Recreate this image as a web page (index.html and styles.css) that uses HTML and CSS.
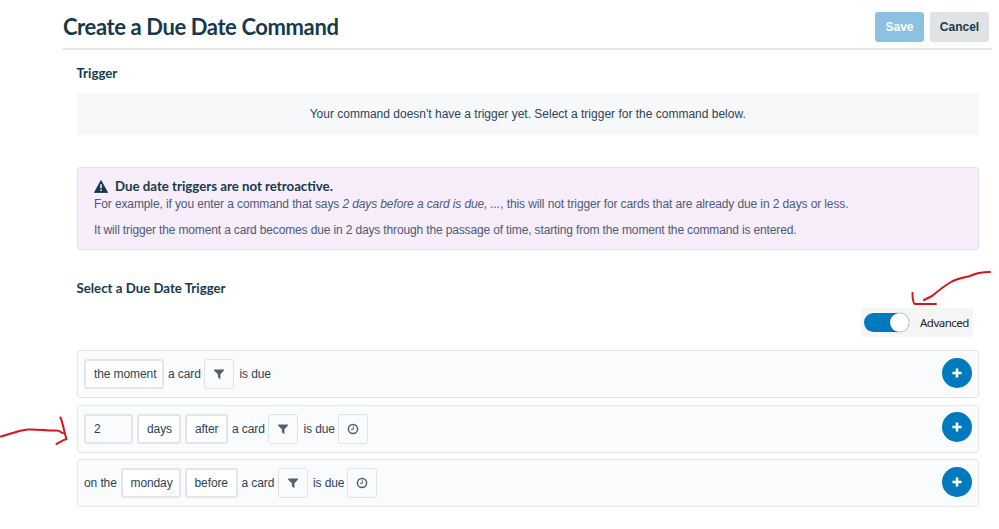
FILE: index.html
```html
<!DOCTYPE html>
<html lang="en">
<head>
    <meta charset="UTF-8">
    <meta name="viewport" content="width=device-width, initial-scale=1.0">
    <title>Create a Due Date Command</title>
    <link rel="stylesheet" href="styles.css">
</head>
<body>
    <!-- Shared icons -->
    <svg class="icon-defs" width="0" height="0">
        <symbol id="icon-filter" viewBox="0 0 12 12">
            <path d="M1.2 1.5h9.6v1.3L7.4 6.2V11.3L4.9 9.3V6.2L1.2 2.8z" fill="currentColor"/>
        </symbol>
        <symbol id="icon-clock" viewBox="0 0 12 12">
            <circle cx="6" cy="6" r="4.6" fill="none" stroke="currentColor" stroke-width="1.5"/>
            <path d="M6.3 3.3v3.1H4" fill="none" stroke="currentColor" stroke-width="1"/>
        </symbol>
        <symbol id="icon-plus" viewBox="0 0 10 10">
            <path d="M5 .5v9M.4 5h9.2" fill="none" stroke="currentColor" stroke-width="2.6"/>
        </symbol>
    </svg>

    <div class="page">
        <header class="page-header">
            <h1>Create a Due Date Command</h1>
            <div class="header-actions">
                <button class="btn btn-save">Save</button>
                <button class="btn btn-cancel">Cancel</button>
            </div>
        </header>

        <main class="content">
            <h2>Trigger</h2>
            <div class="empty-trigger">Your command doesn't have a trigger yet. Select a trigger for the command below.</div>

            <div class="notice">
                <h3>
                    <svg class="warning-icon" viewBox="0 0 14 13">
                        <path d="M7 .5 13.6 12.5H.4z" fill="currentColor" stroke="currentColor" stroke-width=".8" stroke-linejoin="round"/>
                        <path d="M7 4.3v4M7 9.5v1.6" stroke="#f7edfb" stroke-width="1.6"/>
                    </svg>
                    <span>Due date triggers are not retroactive.</span>
                </h3>
                <p class="notice-example">For example, if you enter a command that says <em>2 days before a card is due, ...</em>, this will not trigger for cards that are already due in 2 days or less.</p>
                <p class="notice-detail">It will trigger the moment a card becomes due in 2 days through the passage of time, starting from the moment the command is entered.</p>
            </div>

            <h2 class="select-title">Select a Due Date Trigger</h2>
            <div class="advanced">
                <span class="switch"><span class="knob"></span></span>
                <span class="advanced-label">Advanced</span>
            </div>

            <div class="trigger-list">
                <div class="trigger">
                    <span class="choice choice-moment">the moment</span>
                    <span class="words">a card</span>
                    <button class="icon-btn"><svg><use href="#icon-filter"/></svg></button>
                    <span class="words due">is due</span>
                    <button class="add-btn"><svg><use href="#icon-plus"/></svg></button>
                </div>
                <div class="trigger">
                    <span class="choice choice-number">2</span>
                    <span class="choice choice-days">days</span>
                    <span class="choice choice-after">after</span>
                    <span class="words">a card</span>
                    <button class="icon-btn"><svg><use href="#icon-filter"/></svg></button>
                    <span class="words due">is due</span>
                    <button class="icon-btn"><svg><use href="#icon-clock"/></svg></button>
                    <button class="add-btn"><svg><use href="#icon-plus"/></svg></button>
                </div>
                <div class="trigger">
                    <span class="words on-the">on the</span>
                    <span class="choice choice-monday">monday</span>
                    <span class="choice choice-before">before</span>
                    <span class="words">a card</span>
                    <button class="icon-btn"><svg><use href="#icon-filter"/></svg></button>
                    <span class="words due">is due</span>
                    <button class="icon-btn"><svg><use href="#icon-clock"/></svg></button>
                    <button class="add-btn"><svg><use href="#icon-plus"/></svg></button>
                </div>
            </div>
        </main>
    </div>

    <!-- Hand-drawn arrows -->
    <svg class="marks" viewBox="0 0 999 529">
        <path d="M990 272C981 272 976 273 970 276C962 278 956 279 951 282C944 286 938 291 932 296L924 300"/>
        <path d="M912.5 293C912.5 297 912.5 303 915 304H936"/>
        <path d="M1 436.5C10 434 20 430 28 429.5C38 429 48 431 56 430.5C60 430 61 433 63 433"/>
        <path d="M60.5 417.5C63 423 64 432 66.5 439C63 440 60 442 56.5 444"/>
    </svg>
</body>
</html>
```

FILE: styles.css
```css
* {
    box-sizing: border-box;
}

body {
    margin: 0;
    height: 529px;
    overflow: hidden;
    background: #fff;
    color: #2b4455;
    font-family: "Liberation Sans", Arial, sans-serif;
    font-size: 12px;
}

h1, h2, h3, p {
    margin: 0;
}

h1, h2, h3 {
    color: #17394d;
    font-family: Lato, sans-serif;
    font-weight: 700;
    white-space: nowrap;
}

button {
    padding: 0;
    border: none;
    font-family: inherit;
}

.icon-defs {
    position: absolute;
}

.page {
    margin: 0 7px 0 63px;
}

/* Header */
.page-header {
    display: flex;
    justify-content: space-between;
    height: 50px;
    padding: 12px 3px 0 0;
    border-bottom: 2px solid #e2e6e9;
}

h1 {
    font-size: 22px;
    letter-spacing: -0.4px;
    line-height: 29px;
}

.header-actions {
    display: flex;
    gap: 6px;
}

.btn {
    height: 30px;
    border-radius: 3px;
    font-size: 12px;
    font-weight: 700;
}

.btn-save {
    width: 49px;
    background: #8cc1e1;
    color: #fff;
}

.btn-cancel {
    width: 59px;
    background: #dfe3e6;
    color: #17394d;
}

/* Content */
.content {
    padding: 14px 13px 0 13.5px;
}

h2 {
    font-size: 13.25px;
    line-height: 18px;
}

.empty-trigger {
    height: 42px;
    margin-top: 11px;
    border-radius: 3px;
    background: #f7f8fa;
    line-height: 43px;
    text-align: center;
}

/* Notice */
.notice {
    height: 83px;
    margin-top: 32px;
    padding: 9px 16.5px 0;
    border: 1px solid #e5dfea;
    border-radius: 3px;
    background: #f7edfb;
    color: #4d5b73;
    letter-spacing: -0.11px;
    line-height: 18px;
    white-space: nowrap;
}

.notice h3 {
    display: flex;
    align-items: center;
    gap: 7px;
    height: 18px;
    color: #17394d;
    font-size: 13.25px;
    letter-spacing: 0;
}

.warning-icon {
    width: 14px;
    height: 13px;
}

.notice-detail {
    margin-top: 8px;
    letter-spacing: -0.145px;
}

.select-title {
    margin-top: 29px;
}

/* Advanced toggle */
.advanced {
    display: flex;
    align-items: center;
    gap: 11px;
    width: 112px;
    height: 29px;
    margin: 11px 6px 0 auto;
    padding-left: 3px;
    background: #f5f5f5;
    color: #222;
    font-family: "Noto Sans", "Open Sans", sans-serif;
    font-size: 11.5px;
    letter-spacing: -0.5px;
}

.switch {
    display: flex;
    justify-content: flex-end;
    width: 45px;
    height: 19px;
    border-radius: 10px;
    background: #0079bf;
}

.knob {
    width: 19px;
    height: 19px;
    border-radius: 50%;
    background: #fff;
    box-shadow: 0 0 2px rgba(0, 0, 0, 0.35);
}

/* Trigger rows */
.trigger-list {
    display: grid;
    gap: 6.5px;
    margin-top: 13px;
}

.trigger {
    display: flex;
    align-items: center;
    gap: 4px;
    height: 48px;
    padding: 0 6.5px;
    border: 1px solid #e2e6e9;
    border-radius: 3px;
    background: #fafbfc;
    letter-spacing: -0.1px;
    white-space: nowrap;
}

.words {
    width: 32px;
}

.on-the {
    width: 32.5px;
}

.due {
    width: 30px;
    margin-left: 1.5px;
}

.choice {
    height: 30px;
    padding-left: 8px;
    border: 2px solid #e2e5e9;
    border-radius: 3px;
    background: #fff;
    line-height: 26px;
}

.choice-moment {
    width: 80px;
}

.choice-number {
    width: 49px;
    background: #fafbfc;
}

.choice-days {
    width: 44px;
}

.choice-after {
    width: 43px;
}

.choice-monday {
    width: 60px;
}

.choice-before {
    width: 53px;
}

.icon-btn {
    display: grid;
    place-items: center;
    width: 30px;
    height: 30px;
    border: 1px solid #dfe3e6;
    border-radius: 3px;
    background: #fafbfc;
    color: #4d626e;
}

.icon-btn svg {
    width: 12px;
    height: 12px;
}

.add-btn {
    display: grid;
    place-items: center;
    width: 30px;
    height: 30px;
    margin: 0 0 3px auto;
    border-radius: 50%;
    background: #0079bf;
    color: #fff;
}

.add-btn svg {
    width: 10px;
    height: 10px;
}

/* Arrows drawn over the page */
.marks {
    position: absolute;
    top: 0;
    left: 0;
    width: 999px;
    height: 529px;
    fill: none;
    stroke: #d9141b;
    stroke-width: 2;
    stroke-linecap: round;
    stroke-linejoin: round;
    pointer-events: none;
}
```
